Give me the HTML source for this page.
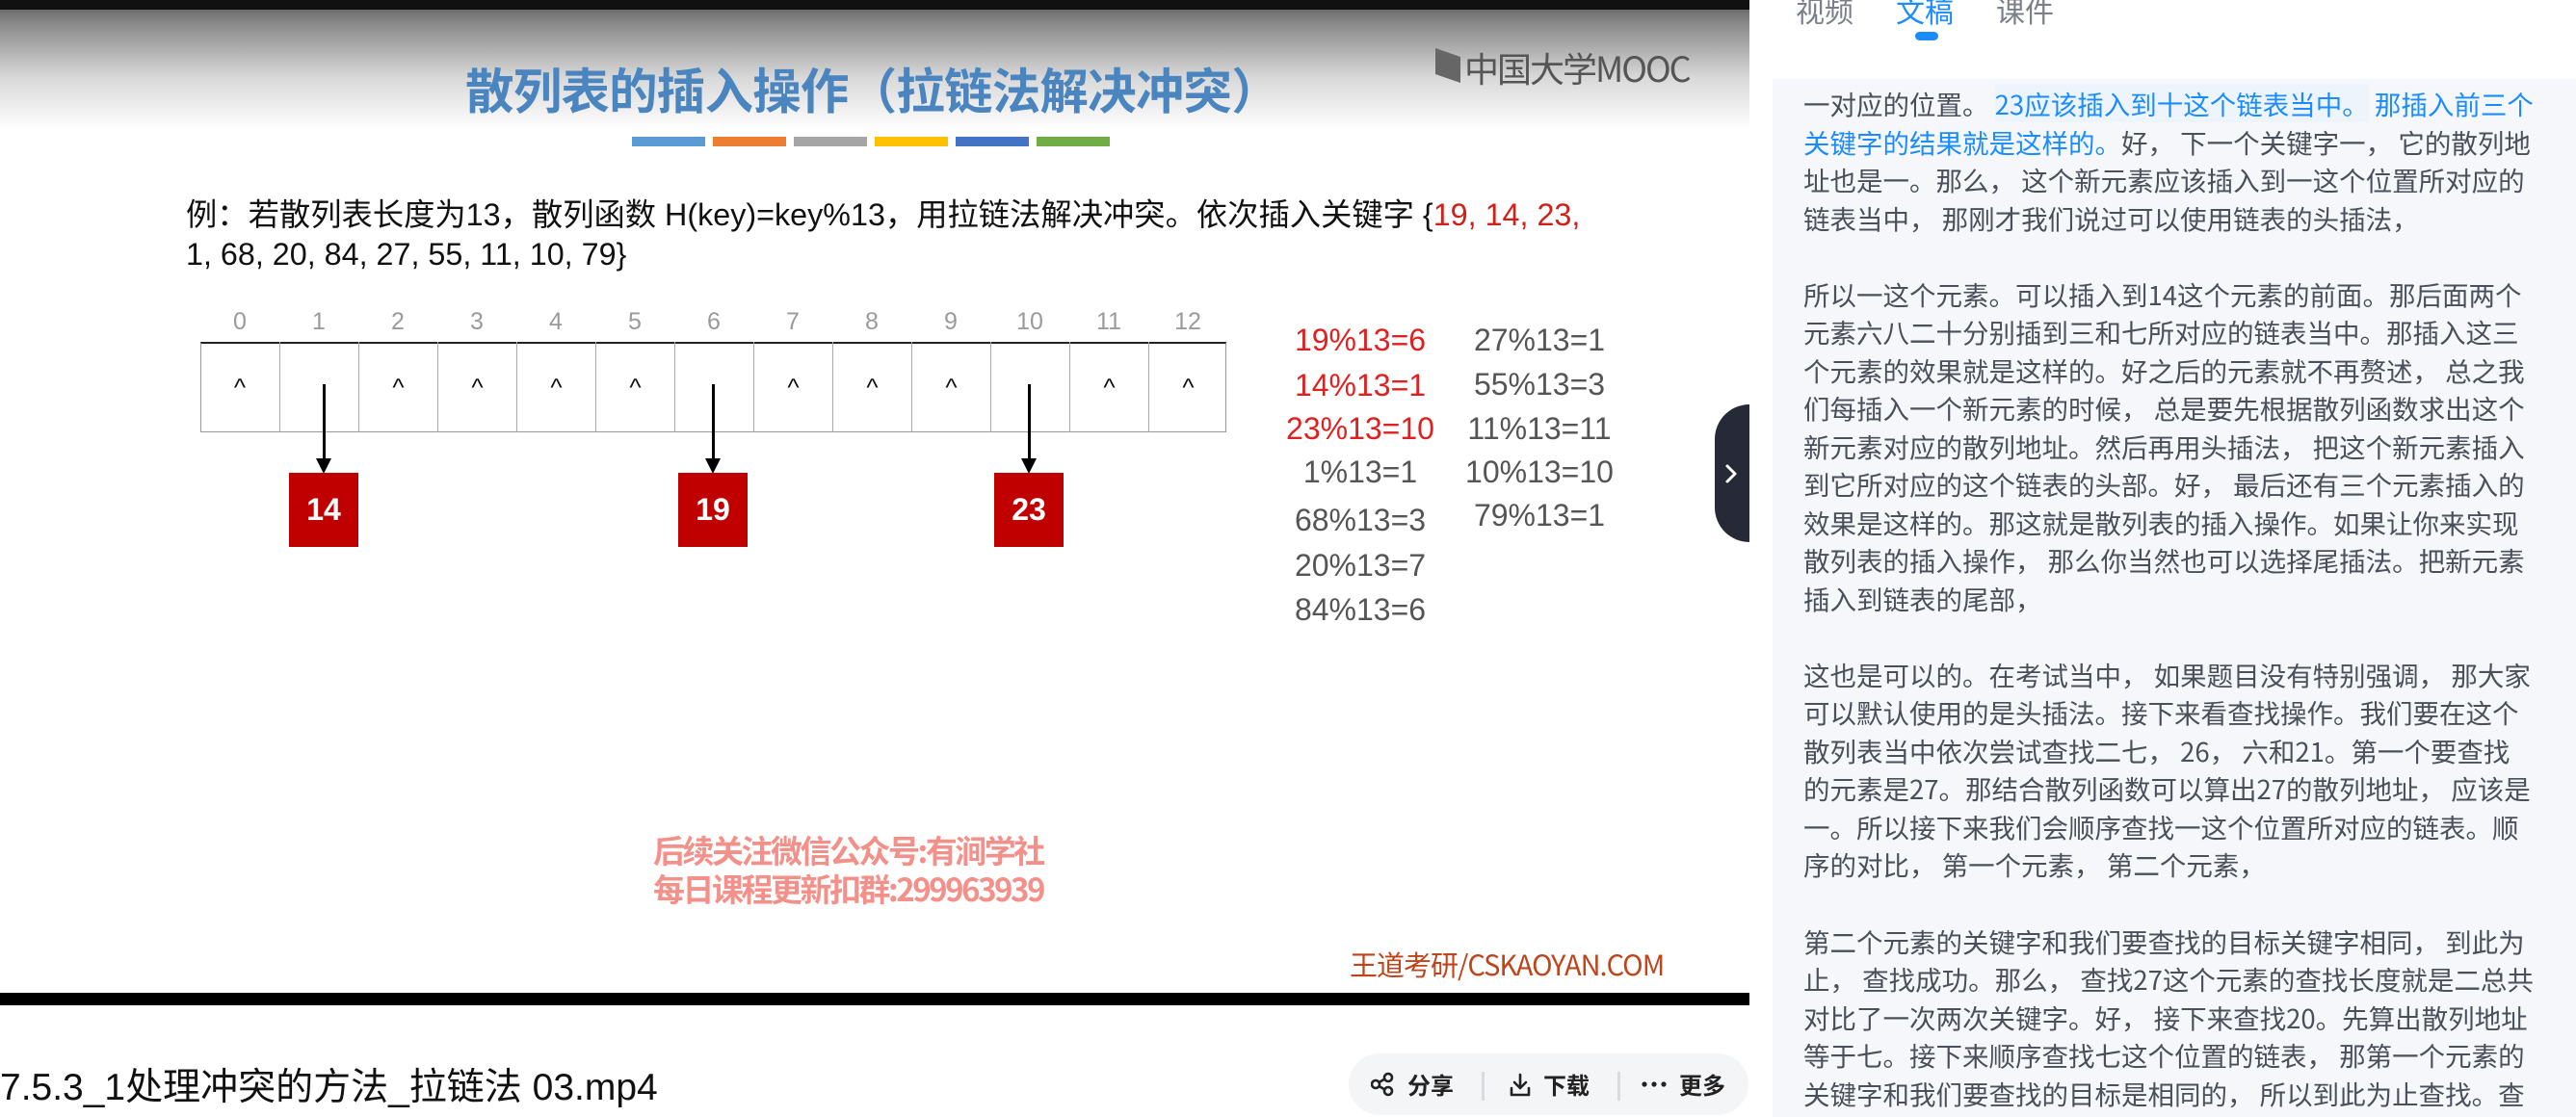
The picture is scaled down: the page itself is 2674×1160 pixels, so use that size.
<!DOCTYPE html>
<html><head><meta charset="utf-8"><style>
*{margin:0;padding:0;box-sizing:border-box}
body{width:2674px;height:1160px;background:#fff;position:relative;overflow:hidden;font-family:"Liberation Sans","Noto Sans CJK SC",sans-serif}
.a{position:absolute;white-space:nowrap}
.grad{left:0;top:0;width:1816px;height:140px;background:linear-gradient(#5a5a5a 0,#8a8a8a 25px,#d8d8d8 80px,#fff 135px)}
.topbar{left:0;top:0;width:1816px;height:10px;background:#111}
.title{left:483px;top:54px;font-size:50.5px;font-weight:bold;color:#4a85bf;font-family:"Noto Sans CJK SC",sans-serif;letter-spacing:-0.8px}
.bar{position:absolute;top:142px;height:10px;width:76px}
.ex{left:193px;font-size:32.3px;color:#111;font-family:"Liberation Sans","Noto Sans CJK SC",sans-serif}
.red{color:#d0201a}
.idx{position:absolute;top:320px;width:82px;text-align:center;font-size:25px;color:#9a9a9a}
.cell{position:absolute;top:355px;height:94px;width:82px;border-left:1px solid #aaa;text-align:center;font-size:26px;line-height:94px;color:#111}
.box{position:absolute;top:491px;width:72px;height:77px;background:#c00000;color:#fff;font-weight:bold;font-size:32px;text-align:center;line-height:77px}
.arr{position:absolute;width:3px;background:#000}
.tri{position:absolute;width:0;height:0;border-left:8px solid transparent;border-right:8px solid transparent;border-top:16px solid #000}
.f{position:absolute;font-size:32px;color:#555;text-align:center;width:220px;line-height:40px}
.f.red{color:#e02020}
.panel{left:1840px;top:82px;width:834px;height:1078px;background:#f5f7fa}
.tx{position:absolute;left:1872px;font-size:27.5px;color:#4a4f5a;font-family:"Noto Sans CJK SC",sans-serif;white-space:pre}
.b{color:#1a8cff}
.btn{position:absolute;top:1108px;font-size:24px;color:#222;font-weight:bold;font-family:'Noto Sans CJK SC',sans-serif}
</style></head><body>
<div class="a grad"></div><div class="a topbar"></div>
<div class="a title">散列表的插入操作（拉链法解决冲突）</div>
<div class="a" style="left:1490px;top:50px;width:26px;height:36px;background:#666;clip-path:polygon(0 0,100% 25%,100% 100%,0 75%)"></div>
<div class="a" style="left:1520px;top:44px;font-size:36px;color:#555;font-family:'Noto Sans CJK SC',sans-serif;letter-spacing:-2px">中国大学MOOC</div>
<div class="bar" style="left:656px;background:#5b9bd5"></div>
<div class="bar" style="left:740px;background:#ed7d31"></div>
<div class="bar" style="left:824px;background:#a5a5a5"></div>
<div class="bar" style="left:908px;background:#ffc000"></div>
<div class="bar" style="left:992px;background:#4472c4"></div>
<div class="bar" style="left:1076px;background:#70ad47"></div>
<div class="a ex" style="top:198px">例：若散列表长度为13，散列函数 H(key)=key%13，用拉链法解决冲突。依次插入关键字 {<span class="red">19, 14, 23,</span></div>
<div class="a ex" style="top:246px">1, 68, 20, 84, 27, 55, 11, 10, 79}</div>
<div class="idx" style="left:208px">0</div><div class="idx" style="left:290px">1</div><div class="idx" style="left:372px">2</div><div class="idx" style="left:454px">3</div><div class="idx" style="left:536px">4</div><div class="idx" style="left:618px">5</div><div class="idx" style="left:700px">6</div><div class="idx" style="left:782px">7</div><div class="idx" style="left:864px">8</div><div class="idx" style="left:946px">9</div><div class="idx" style="left:1028px">10</div><div class="idx" style="left:1110px">11</div><div class="idx" style="left:1192px">12</div>
<div class="a" style="left:208px;top:355px;width:1065px;height:94px;border:1px solid #999;border-top:2px solid #222"></div>
<div class="cell" style="left:208px;border-left:none">^</div><div class="cell" style="left:290px"></div><div class="cell" style="left:372px">^</div><div class="cell" style="left:454px">^</div><div class="cell" style="left:536px">^</div><div class="cell" style="left:618px">^</div><div class="cell" style="left:700px"></div><div class="cell" style="left:782px">^</div><div class="cell" style="left:864px">^</div><div class="cell" style="left:946px">^</div><div class="cell" style="left:1028px"></div><div class="cell" style="left:1110px">^</div><div class="cell" style="left:1192px">^</div>
<div class="arr" style="left:335px;top:399px;height:78px"></div><div class="tri" style="left:328px;top:476px"></div>
<div class="arr" style="left:739px;top:399px;height:78px"></div><div class="tri" style="left:732px;top:476px"></div>
<div class="arr" style="left:1067px;top:399px;height:78px"></div><div class="tri" style="left:1060px;top:476px"></div>
<div class="box" style="left:300px">14</div><div class="box" style="left:704px">19</div><div class="box" style="left:1032px">23</div>
<div class="f red" style="left:1302px;top:333px">19%13=6</div>
<div class="f red" style="left:1302px;top:380px">14%13=1</div>
<div class="f red" style="left:1302px;top:425px">23%13=10</div>
<div class="f" style="left:1302px;top:470px">1%13=1</div>
<div class="f" style="left:1302px;top:520px">68%13=3</div>
<div class="f" style="left:1302px;top:567px">20%13=7</div>
<div class="f" style="left:1302px;top:613px">84%13=6</div>
<div class="f" style="left:1488px;top:333px">27%13=1</div>
<div class="f" style="left:1488px;top:379px">55%13=3</div>
<div class="f" style="left:1488px;top:425px">11%13=11</div>
<div class="f" style="left:1488px;top:470px">10%13=10</div>
<div class="f" style="left:1488px;top:515px">79%13=1</div>
<div class="a" style="left:678px;top:862px;font-size:33px;font-weight:bold;color:#f4908a;font-family:'Noto Sans CJK SC',sans-serif;line-height:40px;letter-spacing:-2.5px">后续关注微信公众号:有涧学社<br>每日课程更新扣群:299963939</div>
<div class="a" style="left:1401px;top:980px;font-size:29px;color:#c0441a;font-family:'Noto Sans CJK SC',sans-serif;letter-spacing:-1px">王道考研/CSKAOYAN.COM</div>
<div class="a" style="left:0;top:1031px;width:1816px;height:13px;background:#000"></div>
<div class="a" style="left:1780px;top:420px;width:36px;height:143px;background:#252a36;border-radius:36px 0 0 36px"></div>
<svg class="a" style="left:1788px;top:478px" width="18" height="28" viewBox="0 0 18 28"><path d="M5 6 L13 14 L5 22" stroke="#fff" stroke-width="3" fill="none" stroke-linecap="round" stroke-linejoin="round"/></svg>
<div class="a" style="left:0;top:1098px;font-size:39px;color:#111;font-family:'Liberation Sans','Noto Sans CJK SC',sans-serif">7.5.3_1处理冲突的方法_拉链法 03.mp4</div>
<div class="a" style="left:1400px;top:1094px;width:415px;height:64px;background:#f4f5f7;border-radius:32px"></div>
<svg class="a" style="left:1423px;top:1113px" width="24" height="26" viewBox="0 0 24 26"><g fill="none" stroke="#222" stroke-width="2.6"><circle cx="5" cy="13" r="4"/><circle cx="18" cy="6" r="4"/><circle cx="18" cy="20" r="4"/><path d="M8.5 11 L14.5 7.5 M8.5 15 L14.5 18.5"/></g></svg>
<div class="btn" style="left:1461px">分享</div>
<div class="a" style="left:1538px;top:1113px;width:3px;height:30px;background:#d8dbe0"></div>
<svg class="a" style="left:1566px;top:1113px" width="24" height="28" viewBox="0 0 24 28"><g fill="none" stroke="#222" stroke-width="2.6" stroke-linecap="round" stroke-linejoin="round"><path d="M12 3 V17 M6 11 L12 17 L18 11 M3 17 V24 H21 V17"/></g></svg>
<div class="btn" style="left:1602px">下载</div>
<div class="a" style="left:1679px;top:1113px;width:3px;height:30px;background:#d8dbe0"></div>
<svg class="a" style="left:1704px;top:1122px" width="26" height="8" viewBox="0 0 26 8"><g fill="#222"><circle cx="3" cy="4" r="2.6"/><circle cx="13" cy="4" r="2.6"/><circle cx="23" cy="4" r="2.6"/></g></svg>
<div class="btn" style="left:1743px">更多</div>
<div class="a" style="left:1864px;top:-12px;font-size:30px;color:#7a7f88;font-family:'Noto Sans CJK SC',sans-serif">视频</div>
<div class="a" style="left:1968px;top:-12px;font-size:30px;color:#1a8cff;font-family:'Noto Sans CJK SC',sans-serif">文稿</div>
<div class="a" style="left:2072px;top:-12px;font-size:30px;color:#7a7f88;font-family:'Noto Sans CJK SC',sans-serif">课件</div>
<div class="a" style="left:1988px;top:33px;width:24px;height:9px;border-radius:5px;background:#1a8cff"></div>
<div class="a panel"></div>
<div class="tx" style="top:87px">一对应的位置。 <span class="b" style="background:#eef4fb">23应该插入到十这个链表当中。</span> <span class="b">那插入前三个</span></div>
<div class="tx" style="top:127px"><span class="b">关键字的结果就是这样的。</span>好， 下一个关键字一， 它的散列地</div>
<div class="tx" style="top:166px">址也是一。那么， 这个新元素应该插入到一这个位置所对应的</div>
<div class="tx" style="top:206px">链表当中， 那刚才我们说过可以使用链表的头插法，</div>
<div class="tx" style="top:285px">所以一这个元素。可以插入到14这个元素的前面。那后面两个</div>
<div class="tx" style="top:324px">元素六八二十分别插到三和七所对应的链表当中。那插入这三</div>
<div class="tx" style="top:364px">个元素的效果就是这样的。好之后的元素就不再赘述， 总之我</div>
<div class="tx" style="top:403px">们每插入一个新元素的时候， 总是要先根据散列函数求出这个</div>
<div class="tx" style="top:443px">新元素对应的散列地址。然后再用头插法， 把这个新元素插入</div>
<div class="tx" style="top:482px">到它所对应的这个链表的头部。好， 最后还有三个元素插入的</div>
<div class="tx" style="top:522px">效果是这样的。那这就是散列表的插入操作。如果让你来实现</div>
<div class="tx" style="top:561px">散列表的插入操作， 那么你当然也可以选择尾插法。把新元素</div>
<div class="tx" style="top:601px">插入到链表的尾部，</div>
<div class="tx" style="top:680px">这也是可以的。在考试当中， 如果题目没有特别强调， 那大家</div>
<div class="tx" style="top:719px">可以默认使用的是头插法。接下来看查找操作。我们要在这个</div>
<div class="tx" style="top:759px">散列表当中依次尝试查找二七， 26， 六和21。第一个要查找</div>
<div class="tx" style="top:798px">的元素是27。那结合散列函数可以算出27的散列地址， 应该是</div>
<div class="tx" style="top:838px">一。所以接下来我们会顺序查找一这个位置所对应的链表。顺</div>
<div class="tx" style="top:877px">序的对比， 第一个元素， 第二个元素，</div>
<div class="tx" style="top:957px">第二个元素的关键字和我们要查找的目标关键字相同， 到此为</div>
<div class="tx" style="top:996px">止， 查找成功。那么， 查找27这个元素的查找长度就是二总共</div>
<div class="tx" style="top:1036px">对比了一次两次关键字。好， 接下来查找20。先算出散列地址</div>
<div class="tx" style="top:1075px">等于七。接下来顺序查找七这个位置的链表， 那第一个元素的</div>
<div class="tx" style="top:1115px">关键字和我们要查找的目标是相同的， 所以到此为止查找。查</div>
</body></html>
